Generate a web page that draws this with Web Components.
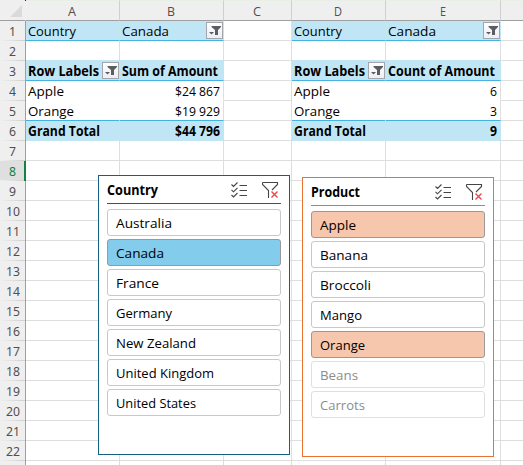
<!DOCTYPE html>
<html lang="en">
<head>
<meta charset="utf-8">
<title>Pivot tables with slicers</title>
<style>
html,body{margin:0;width:523px;height:465px;overflow:hidden;background:#fff}
body{font:13.3px/20px "Open Sans","Noto Sans",sans-serif;color:#000}
</style>
</head>
<body>
<work-sheet></work-sheet>
<script>
// Label whose text is narrowed or widened to a given width.
class FitText extends HTMLElement {
  connectedCallback() {
    if (this.shadowRoot) return;
    const r = this.attachShadow({mode: 'open'});
    r.innerHTML = `<style>:host{display:block;flex:none;white-space:nowrap;width:${this.getAttribute('w')}px}
      span{display:inline-block;transform-origin:0 50%}</style><span></span>`;
    const s = r.querySelector('span');
    s.textContent = this.getAttribute('text');
    s.style.transform = `scaleX(${this.getAttribute('w') / s.getBoundingClientRect().width})`;
  }
}
customElements.define('fit-text', FitText);

class FilterButton extends HTMLElement {
  constructor() {
    super();
    this.attachShadow({mode: 'open'}).innerHTML = `<style>
      :host{display:block;flex:none;box-sizing:border-box;width:17px;height:17px;border:1px solid #a3a6ad;background:linear-gradient(#fff,#eceef4)}
      svg{display:block}</style>
      <svg width="15" height="15"><path d="M4.500 3H14v1l-3 3v5H8V7L4.500 4z" fill="#5c5d61"/><path d="M2 9h5L4.500 11.500z" fill="#5c5d61"/></svg>`;
  }
}
customElements.define('filter-button', FilterButton);

class SheetCell extends HTMLElement {
  connectedCallback() {
    if (this.shadowRoot) return;
    this.attachShadow({mode: 'open'}).innerHTML = `<style>
      :host{display:flex;box-sizing:border-box;height:20px;padding-left:2px;border-right:1px solid #dedede;border-bottom:1px solid #dedede;background:#fff;line-height:20px}
      :host([kind~=plain]){border-color:#fff}
      :host([kind~=edge]){border-right-color:#dedede}
      :host([kind~=band]){background:#c0e6f5;border-color:#c0e6f5}
      :host([kind~=joined]){border-bottom-color:#c0e6f5}
      :host([kind~=ruled]){border-bottom-color:#44b3e1}
      :host([kind~=bold]){font-weight:700}
      :host([kind~=num]){justify-content:flex-end;padding-right:3px}
      filter-button{margin:1px 0 0 auto}
      </style><slot></slot>${this.hasAttribute('filter') ? '<filter-button></filter-button>' : ''}`;
  }
}
customElements.define('sheet-cell', SheetCell);

class HeadCell extends HTMLElement {
  connectedCallback() {
    if (this.shadowRoot) return;
    this.attachShadow({mode: 'open'}).innerHTML = `<style>
      :host{display:flex;justify-content:center;box-sizing:border-box;background:#efefef;color:#505050;font-size:13px;line-height:21px}
      :host([row]){height:20px;border-right:1px solid #9f9f9f;font-family:"Noto Sans",sans-serif;background:linear-gradient(90deg,#efefef,#cfcfcf) 0 100%/100% 1px no-repeat #efefef}
      :host([col]){height:21px;padding-right:1px;border-right:1px solid #d0d0d0;border-bottom:1px solid #9f9f9f;border-top:1px solid #e8efe4}
      :host([active]){background-color:#dfdfdf;color:#107c41;border-right:2px solid #1a7f45}
      </style><slot></slot>`;
  }
}
customElements.define('head-cell', HeadCell);

class SlicerItem extends HTMLElement {
  constructor() {
    super();
    this.attachShadow({mode: 'open'}).innerHTML = `<style>
      :host{display:flex;align-items:center;box-sizing:border-box;height:27px;padding:0 0 0 8px;border:1px solid #c8c8c8;border-radius:3px;background:#fff}
      :host([on]){background:var(--on);border-color:#999}
      :host([off]){color:#8c8c8c;border-color:#dfdfdf}
      </style><slot></slot>`;
  }
}
customElements.define('slicer-item', SlicerItem);

class SlicerPanel extends HTMLElement {
  connectedCallback() {
    if (this.shadowRoot) return;
    this.attachShadow({mode: 'open'}).innerHTML = `<style>
      :host{display:block;box-sizing:border-box;width:192px;height:280px;padding:0 8px;border:1px solid var(--line);background:#fff}
      header{display:flex;height:27px;border-bottom:1px solid var(--line);font-weight:700;line-height:28px}
      svg{display:block;margin-top:5px;fill:none}
      .list{margin-left:auto}.clear{margin:5px 1px 0 14px}
      .items{display:grid;gap:3px;margin-top:5px}
      </style><header><slot name="title"></slot>
      <svg class="list" width="17" height="18"><path d="M.5 3.500l2 2 4-4M.5 8.800l2 2 4-4M.5 14l2 2 4-4M8.500 4.500H16M8.500 9.500H16M8.500 14.500H16" stroke="#454545" stroke-width="1.100"/></svg>
      <svg class="clear" width="18" height="18"><path d="M.5 1.500h15v2L10 9M6.500 17V9.500L.5 3.500v-2" stroke="#454545" stroke-width="1.100"/><path d="M9.500 10.500l6 6M15.500 10.500l-6 6" stroke="#e8484d" stroke-width="1.400"/></svg>
      </header><div class="items"><slot></slot></div>`;
  }
}
customElements.define('slicer-panel', SlicerPanel);

class WorkSheet extends HTMLElement {
  constructor() {
    super();
    const t = (text, w) => `<fit-text text="${text}" w="${w}"></fit-text>`;
    const cell = (kind, body = '', extra = '') => `<sheet-cell kind="${kind}" ${extra}>${body}</sheet-cell>`;
    const e = cell('');
    const rows = {
      1: [cell('band ruled', t('Country', 48)), cell('band ruled', t('Canada', 47), 'filter'), e,
          cell('band ruled', t('Country', 48)), cell('band ruled', t('Canada', 48), 'filter')],
      2: [cell('joined'), cell('joined'), e, cell('joined'), cell('joined')],
      3: [cell('band ruled bold', t('Row Labels', 71), 'filter'), cell('band ruled bold', t('Sum of Amount', 96)), e,
          cell('band ruled bold', t('Row Labels', 71), 'filter'), cell('band ruled bold', t('Count of Amount', 107))],
      4: [cell('plain', t('Apple', 36)), cell('plain edge num', t('$24 867', 45)), e,
          cell('plain', t('Apple', 36)), cell('plain edge num', t('6', 7))],
      5: [cell('plain ruled', t('Orange', 46)), cell('plain edge ruled num', t('$19 929', 45)), e,
          cell('plain ruled', t('Orange', 46)), cell('plain edge ruled num', t('3', 7))],
      6: [cell('band bold', t('Grand Total', 72)), cell('band bold num', t('$44 796', 45)), e,
          cell('band bold', t('Grand Total', 72)), cell('band bold num', t('9', 7))]
    };
    let grid = '<div class="corner"><svg width="25" height="20"><path d="M22 4v12H10z" fill="#dadada"/></svg></div>';
    for (const c of ['A', 'B', 'C', 'D', 'E', '']) grid += `<head-cell col>${c && t(c, c === 'E' ? 6 : 8)}</head-cell>`;
    for (let n = 1; n <= 23; n++) {
      grid += `<head-cell row ${n === 8 ? 'active' : ''}>${n < 23 ? t(n, n < 10 ? 7 : 14) : ''}</head-cell>`;
      grid += (rows[n] || [e, e, e, e, e]).join('') + e;
    }
    const items = list => list.map(([s, w, a]) => `<slicer-item ${a || ''}>${t(s, w)}</slicer-item>`).join('');
    this.attachShadow({mode: 'open'}).innerHTML = `<style>
      :host{display:block;position:relative;width:523px;height:465px;overflow:hidden}
      .grid{display:grid;grid-template-columns:26px 94px 104px 68px 94px 115px 23px}
      .corner{box-sizing:border-box;height:21px;background:linear-gradient(#222,#222) 100% 0/1px 1px no-repeat border-box #efefef;border-right:1px solid transparent;border-bottom:1px solid #9f9f9f;padding-top:1px}
      .corner svg{display:block}
      slicer-panel{position:absolute}
      .country{left:98px;top:175px;--line:#156082;--on:#83cceb}
      .product{left:302px;top:177px;--line:#e97132;--on:#f6c6ad}
      </style><div class="grid">${grid}</div>
      <slicer-panel class="country"><fit-text slot="title" text="Country" w="51"></fit-text>
      ${items([['Australia', 56], ['Canada', 48, 'on'], ['France', 43], ['Germany', 56], ['New Zealand', 80], ['United Kingdom', 98], ['United States', 80]])}</slicer-panel>
      <slicer-panel class="product"><fit-text slot="title" text="Product" w="49"></fit-text>
      ${items([['Apple', 36, 'on'], ['Banana', 48], ['Broccoli', 51], ['Mango', 42], ['Orange', 45, 'on'], ['Beans', 38, 'off'], ['Carrots', 45, 'off']])}</slicer-panel>`;
  }
}
customElements.define('work-sheet', WorkSheet);
</script>
</body>
</html>
